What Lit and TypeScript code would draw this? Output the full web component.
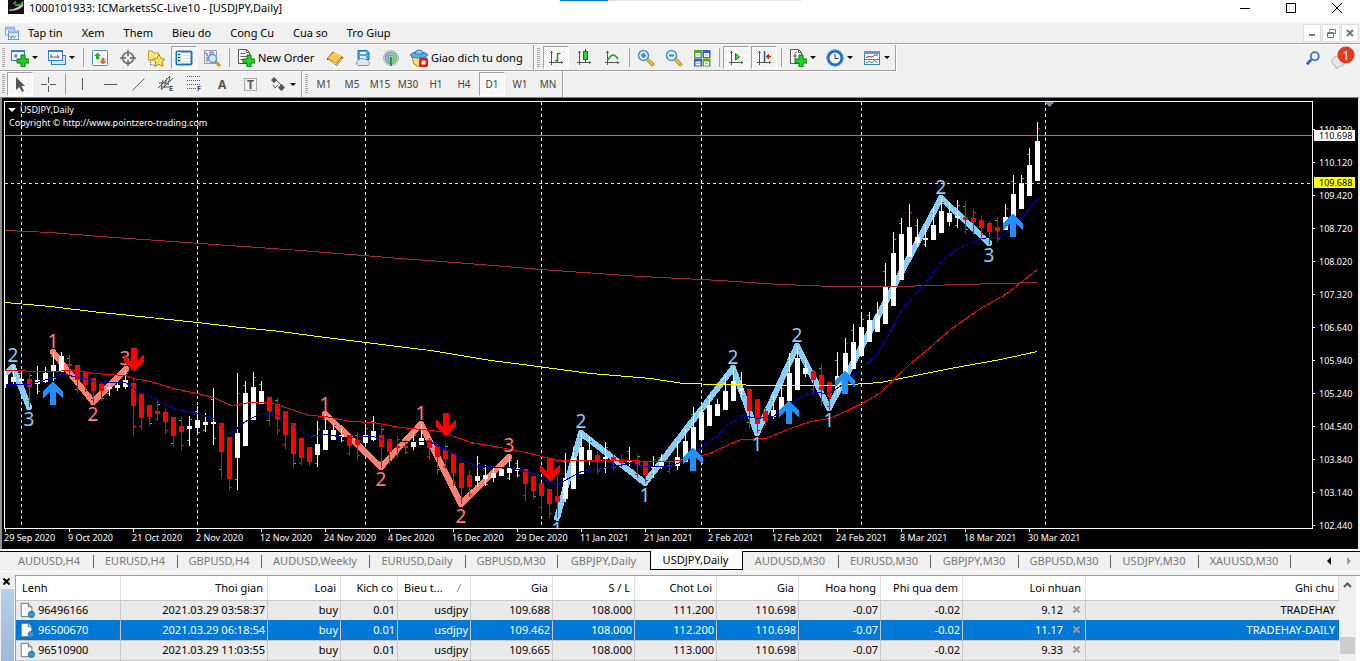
import { LitElement, html, svg, css } from "lit";
import { customElement } from "lit/decorators.js";
import { classMap } from "lit/directives/class-map.js";

/* Bars: wick top, body top, body bottom, wick bottom, 1 = falling. */
const BARS: number[][] = [
  [370,375,385,388,0],[366,377,382,385,0],[370,379,381,385,0],[373,379,387,407,1],[366,380,384,394,0],[367,373,382,383,0],
  [352,365,372,381,0],[352,356,372,372,0],[355,364,366,379,1],[365,365,380,393,1],[372,372,385,392,1],[378,378,391,403,1],
  [382,384,391,401,1],[383,387,388,396,0],[381,385,388,391,0],[369,380,387,389,0],[378,383,406,436,1],[394,394,418,430,1],
  [405,405,417,426,1],[401,411,414,421,1],[409,412,422,434,1],[417,417,436,447,1],[417,426,432,451,1],[416,426,429,446,0],
  [406,420,428,434,0],[413,422,425,432,0],[388,422,424,445,0],[423,423,452,478,1],[437,437,479,491,1],[373,433,458,490,0],
  [381,393,446,446,0],[372,387,420,420,0],[381,391,404,404,0],[397,397,411,425,1],[398,404,419,435,1],[411,411,435,449,1],
  [423,423,454,468,1],[438,438,458,465,1],[447,447,462,466,1],[421,444,455,467,0],[414,430,450,450,0],[423,430,440,440,0],
  [428,435,436,442,0],[435,435,446,456,1],[432,440,445,460,1],[424,435,443,446,0],[416,431,440,441,0],[426,435,447,468,1],
  [439,439,452,464,1],[436,446,448,458,1],[440,446,448,454,1],[432,442,447,450,0],[424,438,445,445,0],[438,440,448,460,1],
  [444,446,457,475,1],[444,450,459,469,1],[454,454,473,486,1],[463,463,488,504,1],[470,475,487,497,1],[456,476,481,487,0],
  [465,475,479,486,0],[468,473,478,482,0],[465,469,476,476,0],[456,468,473,480,0],[460,468,471,477,0],[469,469,484,501,1],
  [476,476,491,499,1],[483,483,496,513,1],[489,489,504,518,1],[477,496,502,518,1],[453,478,499,502,0],[447,458,489,489,0],
  [432,447,474,474,0],[436,450,461,465,0],[451,455,462,474,1],[442,457,459,473,0],[455,457,461,470,1],[454,459,463,467,1],
  [447,460,462,466,0],[454,460,465,478,1],[461,461,475,483,1],[456,466,467,478,0],[454,462,467,469,0],[459,465,466,473,1],
  [442,457,466,470,0],[429,441,462,462,0],[407,427,456,456,0],[406,412,440,440,0],[396,405,426,426,0],[399,404,416,416,0],
  [376,391,410,410,0],[368,381,401,401,0],[372,388,391,398,0],[389,389,411,428,1],[399,399,424,433,1],[408,411,421,426,1],
  [395,410,417,419,0],[384,397,413,413,0],[353,373,401,401,0],[346,358,390,390,0],[360,368,374,377,0],[370,371,380,394,1],
  [364,375,390,406,1],[382,382,397,410,1],[352,376,390,395,0],[338,353,377,377,0],[324,342,369,369,0],[315,327,356,356,0],
  [312,320,342,342,0],[302,315,332,332,0],[263,287,324,324,0],[232,253,306,306,0],[218,234,280,280,0],[204,227,257,257,0],
  [219,237,243,246,0],[224,238,239,247,0],[207,225,240,240,0],[198,211,233,233,0],[202,213,222,226,0],[200,216,218,228,0],
  [201,217,220,234,1],[209,218,222,235,1],[216,220,228,237,1],[221,223,232,245,1],[217,227,231,242,1],[204,217,230,230,0],
  [175,194,217,217,0],[175,183,209,209,0],[148,165,196,196,0],[122,141,181,181,0],
];

const MA_YELLOW = "5,302 50,306 100,312 130,315 197,322 240,327 280,331 325,337 365,342 430,350 490,360 530,365 590,373 650,378 683,383 720,384 770,385 830,385 850,384 880,382 900,378 950,368 1000,359 1037,351";
const MA_BROWN = "5,230 50,232 100,236 200,243 300,250 400,258 480,264 540,269 640,276 720,280 780,284 834,286 900,286 960,284 1000,283 1037,282";
const MA_RED = "5,370 45,371 77,370 93,373 125,375 133,378 150,381 173,388 197,393 213,397 231,405 250,402 270,402 285,407 309,415 325,416 350,421 373,422 400,427 440,431 470,442 500,447 530,453 557,460 600,460 670,461 690,458 709,453 733,442 741,439 765,438 790,428 810,421 829,418 845,411 867,400 880,392 910,363 925,351 950,329 980,308 1005,294 1037,269";
const MA_BLUE = "5,384 29,384 53,377 61,373 77,377 101,382 125,382 133,388 150,396 173,408 197,413 213,418 229,434 245,421 260,413 277,415 285,420 309,436 325,434 345,437 373,436 389,441 429,441 445,449 461,459 477,466 509,467 533,473 549,482 557,484 581,471 613,466 630,463 645,466 669,466 680,462 693,454 709,440 717,435 725,426 741,415 757,418 773,416 789,404 805,394 813,392 829,393 845,382 861,368 877,353 885,340 901,310 925,282 941,261 957,248 981,238 1000,236 1013,228 1037,198";

const WAVES: [string, string][] = [
  ["sky", "3,376 13,367 29,407"],
  ["salmon", "53,352 93,402 126,369"],
  ["salmon", "325,414 381,467 421,424 461,504 509,457"],
  ["sky", "557,518 581,433 645,483 733,368 757,433 797,346 829,408 941,198 989,243"],
];
const COUNTS: [string, number, number, string][] = [
  ["2", 13, 362, "sky"], ["3", 29, 426, "sky"], ["1", 53, 348, "salmon"], ["2", 93, 421, "salmon"], ["3", 125, 365, "salmon"],
  ["1", 325, 411, "salmon"], ["2", 381, 486, "salmon"], ["1", 421, 420, "salmon"], ["2", 461, 523, "salmon"], ["3", 509, 452, "salmon"],
  ["1", 557, 536, "sky"], ["2", 581, 428, "sky"], ["1", 645, 502, "sky"], ["2", 733, 364, "sky"], ["1", 757, 451, "sky"],
  ["2", 797, 342, "sky"], ["1", 829, 427, "sky"], ["2", 941, 194, "sky"], ["3", 989, 262, "sky"],
];
const BUYS = [[53, 381], [693, 447], [789, 400], [845, 370], [1013, 213]];
const SELLS = [[134, 372], [446, 437], [550, 482]];
const PERIODS = [21, 197, 365, 541, 701, 861, 1045];
const PRICES = ["110.820", "110.120", "109.420", "108.720", "108.020", "107.320", "106.640", "105.940", "105.240", "104.540", "103.840", "103.140", "102.440"];
const DATES = ["29 Sep 2020", "9 Oct 2020", "21 Oct 2020", "2 Nov 2020", "12 Nov 2020", "24 Nov 2020", "4 Dec 2020", "16 Dec 2020", "29 Dec 2020", "11 Jan 2021", "21 Jan 2021", "2 Feb 2021", "12 Feb 2021", "24 Feb 2021", "8 Mar 2021", "18 Mar 2021", "30 Mar 2021"];

@customElement("price-chart")
export class PriceChart extends LitElement {
  static styles = css`
    :host { display: flex; flex: 1; min-height: 0; flex-direction: column; background: #000; color: #fff;
      font: 9px/12px "Noto Sans", sans-serif; padding: 3px 0 0 2px; overflow: hidden; }
    .main { display: flex; flex: 1; min-height: 0; }
    .plot { flex: 1; min-width: 0; border: 1px solid #fff; position: relative; overflow: hidden; }
    .canvas { display: block; width: 100%; height: 100%; position: absolute; inset: 0; }
    .caption { position: absolute; left: 4px; top: 1px; line-height: 13px; white-space: nowrap; }
    .mark { display: inline-block; border: 4px solid transparent; border-top-color: #fff; border-bottom: 0; margin: 0 4px 2px -1px; vertical-align: middle; }
    .prices { width: 45px; position: relative; overflow: hidden; }
    .price { height: 33px; display: flex; align-items: center; gap: 4px; }
    .price::before { content: ""; width: 2px; height: 1px; background: #fff; }
    .scale { margin-top: 12px; }
    .tag { position: absolute; left: 1px; right: 3px; height: 11px; line-height: 11px; padding-left: 5px; color: #000; }
    .last { top: 29px; background: #fff; }
    .order { top: 76px; background: #ff0; }
    .dates { display: flex; height: 20px; overflow: hidden; }
    .date { flex: 0 0 64px; white-space: nowrap; position: relative; padding-top: 3px; }
    .date::before { content: ""; position: absolute; left: 1px; top: 0; width: 1px; height: 3px; background: #fff; }
    .wave { fill: none; stroke-width: 6; stroke-linejoin: round; stroke-linecap: round; }
    .sky { stroke: #87cefa; }
    .salmon { stroke: #fa8072; }
    .count { font: 19px "Noto Sans", sans-serif; text-anchor: middle; stroke: none; }
    .count.sky { fill: #87cefa; }
    .count.salmon { fill: #fa8072; }
    .ma { fill: none; stroke-width: 1; }
  `;

  private bar(b: number[], i: number) {
    const x = 5 + 8 * i;
    const [hi, top, bottom, lo, down] = b;
    const color = down ? "#f00" : "#fff";
    const upper = Math.round((hi * 2 + top) / 3);
    const lower = Math.round((bottom + lo * 2) / 3);
    const side = i % 2 ? x + 1 : x - 2;
    return svg`
      <rect x=${x} y=${hi} width="1" height=${lo - hi} fill=${color}/>
      <rect x=${x - 2} y=${top} width="5" height=${Math.max(2, bottom - top)} fill=${color}/>
      ${top - hi > 5 ? svg`<rect x=${side} y=${upper} width="2" height="1" fill=${i % 4 === 1 ? "#f00" : "#32cd32"}/>` : ""}
      ${lo - bottom > 5 ? svg`<rect x=${2 * x - side - 1} y=${lower} width="2" height="1" fill=${down && i % 3 ? "#f00" : "#32cd32"}/>` : ""}`;
  }

  render() {
    return html`
      <div class="main">
        <div class="plot">
          <svg class="canvas" shape-rendering="crispEdges">
            <g transform="translate(-5,-102)">
              ${PERIODS.map((x) => svg`<line x1=${x + 0.5} y1="102" x2=${x + 0.5} y2="4000" stroke="#fff" stroke-dasharray="3 3"/>`)}
              <line x1="5" y1="183.5" x2="6000" y2="183.5" stroke="#ff0" stroke-dasharray="3 3"/>
              <line x1="5" y1="135.5" x2="6000" y2="135.5" stroke="#778899"/>
              ${WAVES.map(([c, p]) => svg`<polyline class="wave ${c}" points=${p}/>`)}
              ${BARS.map((b, i) => this.bar(b, i))}
              <g transform="translate(0.5,0.5)">
                <polyline class="ma" points=${MA_BROWN} stroke="#a52a2a"/>
                <polyline class="ma" points=${MA_YELLOW} stroke="#ff0"/>
                <polyline class="ma" points=${MA_RED} stroke="#f00"/>
                <polyline class="ma" points=${MA_BLUE} stroke="#0000cd"/>
              </g>
              ${COUNTS.map(([t, x, y, c]) => svg`<text class="count ${c}" x=${x} y=${y}>${t}</text>`)}
              ${BUYS.map(([x, y]) => svg`<path transform="translate(${x},${y})" d="M0 0 L10 11 V17 L3 11 V24 H-3 V11 L-10 17 V11Z" fill="#1e90ff"/>`)}
              ${SELLS.map(([x, y]) => svg`<path transform="translate(${x},${y})" d="M0 0 L10 -11 V-17 L3 -11 V-24 H-3 V-11 L-10 -17 V-11Z" fill="#f00"/>`)}
              <path d="M1044 102 H1054 L1049 107Z" fill="#778899"/>
            </g>
          </svg>
          <div class="caption"><span class="mark"></span>USDJPY,Daily<br />Copyright © http://www.pointzero-trading.com</div>
        </div>
        <div class="prices">
          <div class="scale">${PRICES.map((p) => html`<div class="price">${p}</div>`)}</div>
          <div class="tag last">110.698</div>
          <div class="tag order">109.688</div>
        </div>
      </div>
      <div class="dates">${DATES.map((d) => html`<div class="date">${d}</div>`)}</div>`;
  }
}

const axes = svg`<path d="M4.5 2v14M2 13.5h14" stroke="#555" fill="none"/><path d="M3 4l1.500-2.500L6 4zM14 12l2.500 1.500L14 15z" fill="#555"/>`;
const plus = svg`<path d="M10 6h4v4h4v4h-4v4h-4v-4H6v-4h4z" fill="#1fd21f" stroke="#0a7a0a"/>`;
const sheet = svg`<path d="M1.5 .5h8l3 3v11h-11z" fill="#fff" stroke="#555"/><path d="M9.5 .5v3h3" fill="none" stroke="#555"/>`;
const lens = (sign: string) => svg`<path d="M10.500 10.500l6 6" stroke="#9a7818" stroke-width="3.500"/><path d="M10.500 10.500l5.500 5.500" stroke="#f0c830" stroke-width="2"/><circle cx="6.500" cy="6.500" r="5" fill="#d8eefc" stroke="#4a90cc" stroke-width="1.500"/><path d=${sign} stroke="#3a86c0" stroke-width="2"/>`;

const ICONS: Record<string, unknown> = {
  newchart: svg`<rect x=".5" y="1.500" width="13" height="10" fill="#e6f2ff" stroke="#3a7fc0"/><path d="M1 2h12" stroke="#3a7fc0" stroke-width="2"/><path d="M3 7h3M5 5v4" stroke="#557"/>${plus}`,
  profiles: svg`<rect x="3.500" y="6.500" width="14" height="9" fill="#d5e8fa" stroke="#3a7fc0"/><rect x=".5" y="1.500" width="14" height="10" fill="#eef6ff" stroke="#3a7fc0"/><path d="M1 2h13" stroke="#3a7fc0" stroke-width="2"/><path d="M3 5v4M3 8h8M9 6l2 2-2 1" stroke="#568" fill="none"/>`,
  market: svg`<rect x="1.500" y="1.500" width="15" height="15" rx="1" fill="#fff" stroke="#4a90d0"/><path d="M3 6h12M3 10h12M3 14h12" stroke="#ddd"/><path d="M6.500 3.500l3.500 3.500H8v3H5V7H3z" fill="#25b025"/><path d="M12 15.500l3.500-3.500h-2V9h-3v3h-2z" fill="#f06020"/>`,
  crossdata: svg`<circle cx="9" cy="9" r="5.500" fill="none" stroke="#666" stroke-width="1.500"/><path d="M9 1v16M1 9h16" stroke="#666" stroke-width="1.500"/><circle cx="9" cy="9" r="2" fill="#f0f0f0"/>`,
  navigator: svg`<path d="M1.500 11V2h4l1 2h5v7z" fill="#ffe680" stroke="#c09a20"/><path d="M3.500 11v5h4" stroke="#555" fill="none" stroke-dasharray="1 1"/><path d="M12 5.500l2 4 4 .5-3 3 1 4.500-4-2.200-4 2.200.8-4.500L5.500 10l4.500-.5z" fill="#ffe066" stroke="#b58a14"/>`,
  terminal: svg`<rect x="1.500" y="2.500" width="15" height="13" rx="1" fill="#fff" stroke="#1e70b8" stroke-width="2"/><rect x="2" y="3" width="4" height="12" fill="#bcdcf5"/><path d="M3 5.500h2M3 8.500h2M3 11.500h2" stroke="#234"/><path d="M8 6.500h7M8 9.500h7M8 12.500h7" stroke="#ddd"/>`,
  tester: svg`<path d="M1.500 1.500h12v13h-12z" fill="#eef" stroke="#99a"/><path d="M2 4h2v3h3V3h3v4h3M4 8v5" stroke="#668" fill="none"/><path d="M12 12l5 5" stroke="#c89a20" stroke-width="3"/><circle cx="9.500" cy="9.500" r="4" fill="#cfe8fb" stroke="#5a9ed6" stroke-width="1.500"/>`,
  order: svg`${sheet}<path d="M3.500 4.500h5M3.500 7.500h7M3.500 10.500h4" stroke="#666"/>${plus}`,
  book: svg`<path d="M1 10l6-7 10 5.500-6 8z" fill="#b87a14" stroke="#8a5c10"/><path d="M2 9l6-6 8 4-6 7z" fill="#f8cc50"/><path d="M2 11l9 4.500 5-6" stroke="#fff2c0" fill="none"/>`,
  signals: svg`<path d="M4 1.500h9l2 2v7H4z" fill="#46a8ee" stroke="#1a70c0"/><path d="M6 3h6v2H6zM6 7h6v3H6z" fill="#e8f5ff"/><path d="M4 16.500a3 3 0 0 1 0-5 4 3.500 0 0 1 6.500-1 3 3 0 0 1 4 2 2.500 2.500 0 0 1 0 4z" fill="#dfe6f0" stroke="#8090a8"/>`,
  vps: svg`<circle cx="9" cy="9" r="7.500" fill="#dde4ea" stroke="#a8b8c4"/><path d="M9 3.500a5.500 5.500 0 0 1 0 11M9 6a3 3 0 0 1 0 6" fill="none" stroke="#58b85c" stroke-width="1.500"/><path d="M9 3.500a5.500 5.500 0 0 0 0 11M9 6a3 3 0 0 0 0 6" fill="none" stroke="#6a94b8" stroke-width="1.500"/><path d="M9 9v8" stroke="#2a9a30" stroke-width="2"/><circle cx="9" cy="9" r="1.500" fill="#2a9a30"/>`,
  auto: svg`<path d="M2 8h14l-2 7-5 3-5-3z" fill="#ffdf70" stroke="#b08a20"/><ellipse cx="9" cy="6" rx="8.500" ry="3" fill="#58b0e8" stroke="#2878b0"/><path d="M5 5a4 4 0 0 1 8 0z" fill="#8fd0f5" stroke="#2878b0"/><rect x="9" y="9" width="9" height="9" rx="2" fill="#d82010"/><rect x="11.500" y="11.500" width="4" height="4" fill="#fff"/>`,
  bars: svg`${axes}<path d="M10.500 4v9M11 4.500h2.500M8 11.500h2" stroke="#1d9a1d" fill="none" stroke-width="1.500"/>`,
  candles: svg`${axes}<path d="M10.500 0v13" stroke="#075f07"/><rect x="8.500" y="2.500" width="4" height="8" fill="#2fd42f" stroke="#0a800a"/>`,
  line: svg`${axes}<path d="M5 11c3-6 6-7 10-1" stroke="#1d9a1d" fill="none" stroke-width="1.500"/>`,
  zoomin: lens("M4 6.500h5M6.500 4v5"),
  zoomout: lens("M4 6.500h5"),
  tile: svg`<rect x="1" y="1" width="8" height="8" fill="#5aa818"/><rect x="9.500" y="1" width="8" height="8" fill="#2a62d8"/><rect x="1" y="9.500" width="8" height="8" fill="#2a62d8"/><rect x="9.500" y="9.500" width="8" height="8" fill="#5aa818"/><path d="M2.500 4h5v4h-5zM11 4h5v4h-5zM2.500 12.500h5v4h-5zM11 12.500h5v4h-5z" fill="#fff"/><path d="M3 6h4M12 6h3M3 14.500h4M12 14.500h3" stroke="#aac"/>`,
  scroll: svg`${axes}<path d="M8.500 4.500v6.500l4-3z" fill="#35dc35" stroke="#0a800a"/>`,
  shift: svg`${axes}<path d="M9.500 2v11" stroke="#1c5a90" stroke-width="1.500"/><path d="M16 7.500h-3" stroke="#c03000" stroke-width="1.500"/><path d="M10.500 7.500l3.500-3v6z" fill="#c03000"/>`,
  indicator: svg`${sheet}<path d="M8 3c-2 0-2 1-2 3v5M4 7h4" stroke="#555" fill="none"/>${plus}`,
  clock: svg`<circle cx="9" cy="9" r="7" fill="#f2f8ff" stroke="#1d62c0" stroke-width="3"/><circle cx="9" cy="9" r="8" fill="none" stroke="#4aa0f0"/><path d="M9 5v4.500h3.500" stroke="#333" fill="none"/>`,
  template: svg`<rect x="1.500" y="2.500" width="15" height="13" fill="#fff" stroke="#4a80b8"/><path d="M1 3.500h16" stroke="#5a9ad6" stroke-width="3"/><path d="M2 10.500h14" stroke="#4a80b8"/><path d="M3 8.500l3-1 3 .5 3-2h3" stroke="#a03020" fill="none"/><path d="M3 14l3-1.500 3 1 2.500-2 3 2" stroke="#209a20" fill="none"/>`,
  cursor: svg`<path d="M5 2v13l3.500-3 2.500 5 2-1-2.500-5H14z" fill="#555"/>`,
  cross: svg`<path d="M9.500 2v6M9.500 11v6M2 9.500h6M11 9.500h6" stroke="#555"/>`,
  vline: svg`<path d="M9.500 3v12" stroke="#555"/>`,
  hline: svg`<path d="M3 9.500h13" stroke="#555"/>`,
  trend: svg`<path d="M3.500 15.500L15.500 3.500" stroke="#666"/>`,
  channel: svg`<path d="M1 13L13 1M4 15L16 3M2 8h9M4 12h8M6 5l-2 9M10 3l-3 10M13 1l-2 9" stroke="#555" fill="none"/><text x="12" y="16" class="sub">E</text>`,
  fibo: svg`<path d="M2 1.500h14M2 5.500h14M2 9.500h14M2 13.500h9" stroke="#555" stroke-dasharray="1 1"/><text x="12" y="16" class="sub">F</text>`,
  letter: svg`<text x="5" y="14" class="big">A</text>`,
  label: svg`<rect x="3.500" y="3.500" width="12" height="12" fill="none" stroke="#666" stroke-dasharray="1 1"/><text x="6" y="14" class="big">T</text>`,
  arrows: svg`<path d="M5 2l3 3-3 3-3-3zM12.500 9l3.500 3.500-3.500 3.500L9 12.500z" fill="#555"/><path d="M7 5l5 5M4 10l2 3 3-3" stroke="#555" fill="none"/>`,
  app: svg`<rect width="18" height="18" fill="#111"/><path d="M1 13c6 0 10-2 16-7v3c-4 4-9 6-16 5z" fill="#ccc"/><path d="M6 7l3-3M8 8h6l3-4" stroke="#3fae2a" stroke-width="2" fill="none"/>`,
  mdi: svg`<rect x=".5" y="1.500" width="12" height="10" fill="#e8f3ff" stroke="#5a9ae0"/><rect x="4.500" y="6.500" width="13" height="11" fill="#f4f9ff" stroke="#4a86d0"/><path d="M1 3.500h12M5 8.500h12" stroke="#8ab8ee" stroke-width="2"/><path d="M6 12l2 4 2-4 2 4 2-4" stroke="#3a76c0" fill="none"/>`,
  doc: svg`<path d="M2.500 1.500h8l4 4v11h-12z" fill="#fff" stroke="#666"/><path d="M10.500 1.500v4h4" fill="#ddd" stroke="#666"/><circle cx="14" cy="14" r="3.500" fill="#2a9ae0" stroke="#1468a8"/>`,
  search: svg`<path d="M2 16l5-5" stroke="#2a5fd0" stroke-width="3"/><circle cx="11" cy="7" r="4.500" fill="#eef4ff" stroke="#3a6fd8" stroke-width="2"/>`,
};

type Item = string | { icon: string; text?: string; menu?: boolean; on?: boolean; cls?: string; name: string };

@customElement("app-root")
export class AppRoot extends LitElement {
  static styles = css`
    :host { display: flex; flex-direction: column; height: 100vh; overflow: hidden; background: #f0f0f0; color: #000;
      font: 11px/16px "Noto Sans", "Open Sans", sans-serif; }
    button { font: inherit; color: inherit; background: none; border: 0; padding: 0; margin: 0; }
    svg { display: block; flex: none; }
    .titlebar { height: 23px; background: #fff; display: flex; position: relative; }
    .progress { position: absolute; top: 0; left: 560px; width: 241px; height: 1px; background: linear-gradient(90deg, #0078d7 48px, #e0e0e0 48px); }
    .title { flex: 1; margin: 0; padding-left: 5px; font-size: 11px; font-weight: 400; line-height: 16px; }
    .appicon { margin: -2px 0 0 8px; }
    .win { width: 46px; height: 16px; display: grid; place-items: center; }
    .menubar { height: 20px; display: flex; align-items: center; padding-left: 5px; border-bottom: 1px solid #a0a0a0; box-shadow: 0 1px #fff; margin-bottom: 1px; }
    .menus { display: flex; gap: 19px; flex: 1; padding-left: 9px; }
    .mdi { width: 18px; height: 18px; background: #fff; border: 1px solid #ddd; display: grid; place-items: center; margin-right: 1px; }
    .bar { display: flex; height: 26px; }
    .group { display: flex; border-right: 1px solid #a0a0a0; border-bottom: 1px solid #a0a0a0; box-shadow: 1px 1px #fff; padding-left: 6px; position: relative; margin-right: 1px; }
    .group + .group { padding-left: 7px; }
    .group::before { content: ""; position: absolute; left: 2px; top: 3px; bottom: 3px; width: 3px; background: repeating-linear-gradient(#a8a8a8 0 1px, #f0f0f0 1px 2px); }
    .group.flat { border-bottom: 0; box-shadow: 1px 0 #fff; }
    .tool { width: 28px; display: flex; align-items: center; justify-content: center; white-space: nowrap; }
    .tool.drop { width: 37px; justify-content: flex-start; padding-left: 5px; gap: 3px; }
    .tool.drop::after { content: ""; border: 3px solid transparent; border-top-color: #000; border-bottom: 0; }
    .tool.text { justify-content: flex-start; padding-left: 5px; gap: 3px; }
    .tool.neworder { width: 89px; }
    .tool.autotrade { width: 128px; }
    .tool.on { background: repeating-conic-gradient(#f0f0f0 0 25%, #fff 0 50%) 0 0 / 2px 2px; border: 1px solid; border-color: #a0a0a0 #fff #fff #a0a0a0; width: 26px; margin: 1px; }
    .frame { font-size: 10px; color: #444; }
    .split { width: 1px; background: #a0a0a0; margin: 3px 2px 3px 3px; }
    .spacer { flex: 1; }
    .search { width: 30px; display: grid; place-items: center; }
    .alerts { width: 30px; margin-right: 2px; display: grid; place-items: center; }
    .sub { font: 700 7px "Noto Sans", sans-serif; fill: #444; }
    .big { font: 700 12px "Noto Sans", sans-serif; fill: #555; }
    .num { font: 13px "Noto Sans", sans-serif; fill: #fff; text-anchor: middle; }
    .chartwrap { flex: 1; min-height: 0; display: flex; border: solid; border-width: 1px 2px 0; border-color: #808080 #f0f0f0 #808080 #909090; }
    .tabs { display: flex; height: 19px; border-top: 1px solid #000; box-shadow: 0 -2px #fff; margin-top: 2px; padding-left: 6px; color: #777; }
    .tab { display: flex; align-items: center; justify-content: center; position: relative; white-space: nowrap; padding: 0 2px 2px 0; box-sizing: border-box; }
    .tab::after { content: ""; position: absolute; right: 0; top: 3px; height: 13px; width: 1px; background: #666; }
    .tab.active { background: #fff; color: #000; border: 1px solid #000; border-top: 0; margin: -1px 0 1px -1px; padding-bottom: 0; }
    .tab.active::after { content: none; }
    .arrows { display: flex; flex: 1; justify-content: flex-end; gap: 14px; align-items: center; padding: 0 9px 2px 0; }
    .terminal { display: flex; border-top: 1px solid #fff; padding-top: 3px; }
    .side { width: 15px; display: flex; flex-direction: column; align-items: center; }
    .strip { flex: 1; width: 13px; margin-top: 1px; background: linear-gradient(#b9cfea, #9db8da); }
    .shut { height: 13px; padding-right: 2px; }
    .orders { flex: 1; min-width: 0; border: solid #a0a0a0; border-width: 1px 0 0 1px; background: #fff; display: flex; }
    table { width: 100%; table-layout: fixed; border-collapse: separate; border-spacing: 0; line-height: 16px; border-bottom: 1px solid #c8c8c8; }
    th { height: 24px; padding: 0 4px 0 6px; font-weight: 400; text-align: right; border-right: 1px solid #e0e0e0; white-space: nowrap; }
    th:first-child, td:first-child { text-align: left; }
    td { height: 17px; padding: 0 2px 2px 4px; text-align: right; background: #eaeaea; border-top: 1px solid #c8c8c8; border-right: 1px solid #c8c8c8; white-space: nowrap; }
    .selected td { background: #0078d7; color: #fff; border-top-color: #0078d7; }
    .id { display: flex; gap: 3px; align-items: center; margin-left: -1px; }
    .symbol { display: flex; justify-content: space-between; color: inherit; }
    .profit { display: flex; justify-content: flex-end; gap: 10px; align-items: center; padding-right: 3px; }
    td.edge { border-right: 0; padding-right: 4px; }
    .c-id { width: 105px; } .c-time { width: 147px; } .c-type { width: 73px; } .c-lot { width: 57px; } .c-sym { width: 73px; }
    .c-num { width: 82px; } .c-profit { width: 123px; }
    .scrollbar { width: 17px; background: #f0f0f0; margin-right: 4px; display: flex; flex-direction: column; align-items: center; padding-top: 6px; }
    .thumb { width: 15px; height: 17px; background: #cdcdcd; margin-top: 49px; }
  `;

  private icon(name: string, size = 18) {
    return html`<svg width=${size} height=${size} viewBox="0 0 18 18" aria-hidden="true">${ICONS[name]}</svg>`;
  }

  private tools(items: Item[]) {
    return items.map((t) =>
      typeof t === "string"
        ? html`<span class="split"></span>`
        : html`<button class=${classMap({ tool: true, drop: !!t.menu, on: !!t.on, text: !!t.text, [t.cls ?? "plain"]: true })} aria-label=${t.name}>${this.icon(t.icon)}${t.text ?? ""}</button>`);
  }

  private standard: Item[] = [
    { icon: "newchart", menu: true, name: "New chart" }, { icon: "profiles", menu: true, name: "Profiles" }, "|",
    { icon: "market", name: "Market watch" }, { icon: "crossdata", name: "Data window" }, { icon: "navigator", name: "Navigator" },
    { icon: "terminal", on: true, name: "Terminal" }, { icon: "tester", name: "Strategy tester" }, "|",
    { icon: "order", text: "New Order", cls: "neworder", name: "New Order" }, { icon: "book", name: "MetaEditor" },
    { icon: "signals", name: "Signals" }, { icon: "vps", name: "Hosting" },
    { icon: "auto", text: "Giao dich tu dong", cls: "autotrade", name: "Giao dich tu dong" },
  ];
  private charts: Item[] = [
    { icon: "bars", on: true, name: "Bar chart" }, { icon: "candles", name: "Candlesticks" }, { icon: "line", name: "Line chart" }, "|",
    { icon: "zoomin", name: "Zoom in" }, { icon: "zoomout", name: "Zoom out" }, { icon: "tile", name: "Tile windows" }, "|",
    { icon: "scroll", on: true, name: "Auto scroll" }, { icon: "shift", on: true, name: "Chart shift" }, "|",
    { icon: "indicator", menu: true, name: "Indicators" }, { icon: "clock", menu: true, name: "Periods" }, { icon: "template", menu: true, name: "Templates" },
  ];
  private drawing: Item[] = [
    { icon: "cursor", on: true, name: "Cursor" }, { icon: "cross", name: "Crosshair" }, "|",
    { icon: "vline", name: "Vertical line" }, { icon: "hline", name: "Horizontal line" }, { icon: "trend", name: "Trendline" },
    { icon: "channel", name: "Equidistant channel" }, { icon: "fibo", name: "Fibonacci" }, { icon: "letter", name: "Text" },
    { icon: "label", name: "Text label" }, { icon: "arrows", menu: true, name: "Arrows" },
  ];
  private tabs: [string, number][] = [
    ["AUDUSD,H4", 88], ["EURUSD,H4", 84], ["GBPUSD,H4", 84], ["AUDUSD,Weekly", 108], ["EURUSD,Daily", 96], ["GBPUSD,M30", 92],
    ["GBPJPY,Daily", 93], ["USDJPY,Daily", 93], ["AUDUSD,M30", 96], ["EURUSD,M30", 92], ["GBPJPY,M30", 88], ["GBPUSD,M30", 92],
    ["USDJPY,M30", 88], ["XAUUSD,M30", 92],
  ];
  private rows = [
    ["96496166", "2021.03.29 03:58:37", "buy", "0.01", "usdjpy", "109.688", "108.000", "111.200", "110.698", "-0.07", "-0.02", "9.12", "TRADEHAY"],
    ["96500670", "2021.03.29 06:18:54", "buy", "0.01", "usdjpy", "109.462", "108.000", "112.200", "110.698", "-0.07", "-0.02", "11.17", "TRADEHAY-DAILY"],
    ["96510900", "2021.03.29 11:03:55", "buy", "0.01", "usdjpy", "109.665", "108.000", "113.000", "110.698", "-0.07", "-0.02", "9.33", ""],
  ];

  private cell(v: string, i: number) {
    if (i === 0) return html`<td><span class="id">${this.icon("doc", 16)}${v}</span></td>`;
    if (i === 11)
      return html`<td><span class="profit">${v}<svg width="7" height="7" viewBox="0 0 7 7"><path d="M.5.5l6 6M6.500.5l-6 6" stroke="#999" stroke-width="2"/></svg></span></td>`;
    return html`<td class=${i === 12 ? "edge" : ""}>${v}</td>`;
  }

  render() {
    return html`
      <header class="titlebar">
        <span class="progress"></span>
        <span class="appicon">${this.icon("app", 16)}</span>
        <h1 class="title">1000101933: ICMarketsSC-Live10 - [USDJPY,Daily]</h1>
        <button class="win" aria-label="Minimize"><svg width="10" height="10"><path d="M0 5.500h10" stroke="#000"/></svg></button>
        <button class="win" aria-label="Maximize"><svg width="10" height="10"><path d="M.5.5h9v9h-9z" fill="none" stroke="#000"/></svg></button>
        <button class="win" aria-label="Close"><svg width="10" height="10"><path d="M0 0l10 10M10 0L0 10" stroke="#000"/></svg></button>
      </header>
      <nav class="menubar">
        ${this.icon("mdi", 14)}
        <div class="menus">${["Tap tin", "Xem", "Them", "Bieu do", "Cong Cu", "Cua so", "Tro Giup"].map((m) => html`<button>${m}</button>`)}</div>
        <button class="mdi" aria-label="Minimize chart"><svg width="8" height="8"><path d="M1 6h6" stroke="#6b7b8c" stroke-width="2"/></svg></button>
        <button class="mdi" aria-label="Restore chart"><svg width="9" height="9"><path d="M2.500 2.500v-2h6v4h-2M.5 3.500h6v5h-6zM.5 4.500h6" fill="none" stroke="#6b7b8c"/></svg></button>
        <button class="mdi" aria-label="Close chart"><svg width="8" height="8"><path d="M1 1l6 6M7 1L1 7" stroke="#6b7b8c" stroke-width="2"/></svg></button>
      </nav>
      <div class="bar">
        <div class="group">${this.tools(this.standard)}</div>
        <div class="group">${this.tools(this.charts)}</div>
        <span class="spacer"></span>
        <button class="search" aria-label="Search">${this.icon("search", 16)}</button>
        <button class="alerts" aria-label="Notifications">
          <svg width="26" height="24" viewBox="0 0 26 24"><path d="M2 15a7 5 0 1 1 8 5l-4 3v-3a5 5 0 0 1-4-5z" fill="#e8e8ec" stroke="#b0b0b8"/><circle cx="16" cy="9" r="8.500" fill="#e03a22"/><text class="num" x="16" y="14">1</text></svg>
        </button>
      </div>
      <div class="bar">
        <div class="group flat">${this.tools(this.drawing)}</div>
        <div class="group flat">${["M1", "M5", "M15", "M30", "H1", "H4", "D1", "W1", "MN"].map((f) => html`<button class=${classMap({ tool: true, frame: true, on: f === "D1" })}>${f}</button>`)}</div>
      </div>
      <div class="chartwrap"><price-chart></price-chart></div>
      <nav class="tabs">
        ${this.tabs.map(([t, w]) => html`<button class=${classMap({ tab: true, active: t === "USDJPY,Daily" })} style="width:${w}px">${t}</button>`)}
        <span class="arrows"><svg width="5" height="8"><path d="M4 0v8L0 4z"/></svg><svg width="5" height="8"><path d="M1 0v8l4-4z" fill="#999"/></svg></span>
      </nav>
      <section class="terminal">
        <div class="side">
          <button class="shut" aria-label="Close terminal"><svg width="7" height="7"><path d="M.5.5l6 6M6.500.5l-6 6" stroke="#000" stroke-width="2"/></svg></button>
          <span class="strip"></span>
        </div>
        <div class="orders">
          <table>
            <colgroup>
              <col class="c-id" /><col class="c-time" /><col class="c-type" /><col class="c-lot" /><col class="c-sym" />
              <col class="c-num" /><col class="c-num" /><col class="c-num" /><col class="c-num" /><col class="c-num" /><col class="c-num" />
              <col class="c-profit" /><col />
            </colgroup>
            <thead><tr>
              ${["Lenh", "Thoi gian", "Loai", "Kich co"].map((h) => html`<th>${h}</th>`)}
              <th><span class="symbol">Bieu t...<svg width="12" height="16"><path d="M3 12l4-8" stroke="#888"/></svg></span></th>
              ${["Gia", "S / L", "Chot Loi", "Gia", "Hoa hong", "Phi qua dem", "Loi nhuan", "Ghi chu"].map((h) => html`<th>${h}</th>`)}
            </tr></thead>
            <tbody>${this.rows.map((r, n) => html`<tr class=${n === 1 ? "selected" : ""}>${r.map((v, i) => this.cell(v, i))}</tr>`)}</tbody>
          </table>
          <div class="scrollbar">
            <svg width="9" height="6"><path d="M1 5l3.500-3.500L8 5" fill="none" stroke="#555" stroke-width="2"/></svg>
            <span class="thumb"></span>
          </div>
        </div>
      </section>`;
  }
}
